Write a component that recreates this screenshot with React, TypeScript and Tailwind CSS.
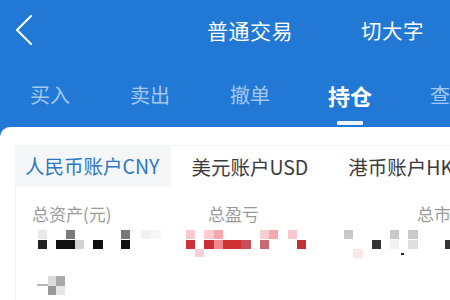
import React from "react";

const font = { fontFamily: '"Noto Sans CJK SC", "Noto Sans", sans-serif' };

type Block = [number, number, number, number, string];

// mosaic of the masked numbers, coords relative to the top of the svg (y = 228)
const blocks: Block[] = [
  // 总资产
  [37, 3, 9, 9, "#e8e8e8"],
  [65, 3, 9, 9, "#7a7a7a"],
  [120, 3, 9, 9, "#777"],
  [140, 3, 10, 9, "#f1f1f1"],
  [150, 3, 10, 9, "#f8f8f8"],
  [37, 13, 9, 9, "#222"],
  [55, 13, 19, 9, "#111"],
  [74, 13, 9, 9, "#d2d2d2"],
  [92, 13, 10, 9, "#111"],
  [120, 13, 9, 9, "#111"],
  [47, 49, 8, 10, "#dcdcdc"],
  [55, 49, 9, 10, "#aaa"],
  [47, 59, 8, 9, "#999"],
  [55, 59, 9, 9, "#e6e6e6"],
  [36, 57, 11, 2, "#b8b8b8"],
  // 总盈亏
  [185, 3, 9, 9, "#f8c9cd"],
  [203, 3, 10, 9, "#f9cdd1"],
  [213, 3, 9, 9, "#f4a9af"],
  [259, 3, 9, 9, "#f9cdd1"],
  [268, 3, 9, 9, "#f4a9af"],
  [287, 3, 9, 9, "#f9c6cb"],
  [185, 13, 9, 9, "#c7343b"],
  [203, 13, 10, 9, "#cb3036"],
  [213, 13, 9, 9, "#ee8890"],
  [222, 13, 18, 9, "#d03131"],
  [240, 13, 10, 9, "#c75058"],
  [259, 13, 9, 9, "#c86a72"],
  [296, 13, 9, 9, "#c03038"],
  [194, 22, 9, 8, "#f6d0d4"],
  // 总市值
  [343, 3, 9, 9, "#c9c9c9"],
  [389, 3, 9, 9, "#c9c9c9"],
  [407, 3, 10, 9, "#cacaca"],
  [371, 13, 9, 9, "#333"],
  [389, 13, 9, 9, "#f0f0f0"],
  [407, 13, 10, 9, "#dedede"],
  [444, 13, 9, 9, "#333"],
  [352, 22, 10, 9, "#fbe8ea"],
  [400, 26, 3, 2, "#222"],
];

export default function App() {
  const tabs = ["买入", "卖出", "撤单", "持仓", "查询"];

  return (
    <div
      className="w-[450px] h-[300px] overflow-hidden bg-[#2279d5] flex flex-col"
      style={font}
    >
      {/* HEADER */}
      <div className="h-[60px] flex items-center shrink-0">
        <svg
          width="20"
          height="32"
          viewBox="0 0 20 32"
          className="ml-[14px]"
          fill="none"
          stroke="white"
          strokeWidth="2"
          strokeLinecap="round"
          strokeLinejoin="round"
        >
          <path d="M17 2 L3 16 L17 30" />
        </svg>
        <div className="ml-auto text-white text-[21px] leading-[28px] tracking-[0.5px]">
          普通交易
        </div>
        <div className="ml-[68px] mr-[26px] text-white text-[20.5px] leading-[28px] tracking-[0.5px]">
          切大字
        </div>
      </div>

      {/* TABS */}
      <div className="h-[67px] flex shrink-0">
        {tabs.map((t, i) => (
          <div
            key={t}
            className="w-[100px] shrink-0 flex flex-col items-center pt-[23px]"
          >
            <div
              className={
                i === 3
                  ? "text-white text-[22px] font-semibold leading-[24px] whitespace-nowrap"
                  : "text-[#a3c8f1] text-[20px] leading-[24px] whitespace-nowrap"
              }
            >
              {t}
            </div>
            {i === 3 && (
              <div className="mt-[14px] w-[26px] h-[4px] rounded-[1px] bg-[#eef4fb]" />
            )}
          </div>
        ))}
      </div>

      {/* PANEL */}
      <div className="flex-1 bg-white rounded-tl-[10px] flex flex-col">
        <div className="mt-[18px] h-[42px] flex items-stretch pl-[15px] shrink-0">
          <div className="bg-[#f5f6f8] pl-[10px] pr-[12px] flex items-center text-[#2b79c2] text-[19.5px] whitespace-nowrap">
            人民币账户CNY
          </div>
          <div className="flex items-center pl-[20px] pr-[20px] border-t border-[#f4f4f4] text-[#3c3c3c] text-[19.5px] whitespace-nowrap">
            美元账户USD
          </div>
          <div className="w-px bg-[#efefef]" />
          <div className="flex items-center pl-[20px] border-t border-[#f4f4f4] text-[#3c3c3c] text-[19.5px] whitespace-nowrap">
            港币账户HKD
          </div>
        </div>

        <div className="flex-1 ml-[15px] border-l border-[#f3f3f3] flex flex-col">
          <div className="mt-[15px] h-[24px] flex items-center text-[#9a9a9a] text-[17px] whitespace-nowrap">
            <div className="ml-[16px] w-[176px] shrink-0">总资产(元)</div>
            <div className="w-[209px] shrink-0">总盈亏</div>
            <div className="shrink-0">总市值</div>
          </div>
          <svg
            width="450"
            height="70"
            viewBox="15 0 450 70"
            className="mt-[1px] shrink-0"
          >
            {blocks.map(([x, y, w, h, c], i) => (
              <rect key={i} x={x} y={y} width={w} height={h} fill={c} />
            ))}
          </svg>
        </div>
      </div>
    </div>
  );
}
